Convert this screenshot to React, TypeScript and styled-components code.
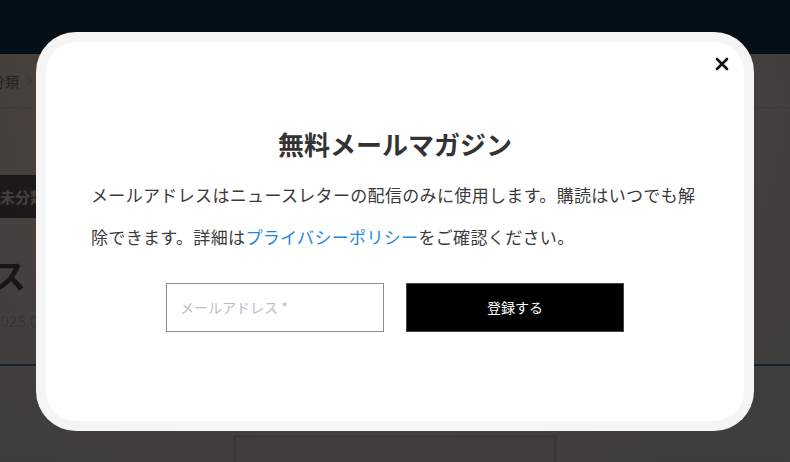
import { createGlobalStyle, styled } from "styled-components";
import { ChevronRight } from "lucide-react";

// Base reset: the page is a fixed viewport with a modal open
const GlobalStyle = createGlobalStyle`
  html, body {
    margin: 0;
    height: 100%;
    overflow: hidden;
    background: #ffffff;
  }
  body {
    font-family: "Noto Sans CJK JP", "Noto Sans", sans-serif;
    color: #333;
  }
  * { box-sizing: border-box; }
`;

// === Page behind the modal ===

const Page = styled.div`
  position: relative;
  min-height: 100vh;
`;

const Header = styled.header`
  position: relative;
  z-index: 20;
  height: 54px;
  background: #050f17;
`;

const BreadcrumbBar = styled.nav`
  height: 54px;
  border-bottom: 1px solid #d8d8d8;
  display: flex;
  justify-content: center;
  overflow: hidden;
`;

const Column = styled.div`
  flex: 0 0 806px;
  display: flex;
  flex-direction: column;
`;

const Crumbs = styled.div`
  display: flex;
  align-items: center;
  gap: 4px;
  height: 100%;
  margin-left: -15px;
  font-size: 14px;
  color: #333;
  svg { color: #777; }
`;

const Article = styled.main`
  display: flex;
  justify-content: center;
  overflow: hidden;
  padding-top: 67px;
`;

const Tag = styled.span`
  align-self: flex-start;
  height: 43px;
  display: flex;
  align-items: center;
  padding: 0 8px;
  background: #071a28;
  color: #fff;
  font-weight: 700;
  font-size: 15px;
`;

const Title = styled.h1`
  margin: 33px 0 0;
  font-size: 34px;
  line-height: 1.4;
  font-weight: 700;
  color: #000;
  white-space: nowrap;
`;

const DateText = styled.p`
  margin: 12px 0 0;
  font-family: Roboto, "Liberation Sans", sans-serif;
  font-size: 15px;
  line-height: 1.5;
  color: #c4c4c4;
`;

const Rule = styled.hr`
  margin: 31px 0 0;
  border: 0;
  height: 2px;
  background: #0a5a8a;
`;

const CopyBox = styled.button`
  align-self: center;
  margin-top: 69px;
  width: 324px;
  height: 60px;
  border: 3px solid #d4d4d4;
  background: #fff;
  font-family: inherit;
  font-size: 15px;
  color: #333;
  padding-top: 10px;
`;

// === Modal ===

const Backdrop = styled.div`
  position: fixed;
  inset: 0;
  z-index: 10;
  background: radial-gradient(
    ellipse 70% 90% at 45% 25%,
    rgba(44, 28, 20, 0.83) 0%,
    rgba(38, 27, 21, 0.83) 45%,
    rgba(22, 22, 22, 0.83) 100%
  );
`;

const ModalLayer = styled.div`
  position: fixed;
  inset: 0;
  z-index: 30;
  display: flex;
  align-items: center;
  justify-content: center;
`;

const Frame = styled.div`
  width: 718px;
  padding: 10px;
  border-radius: 40px;
  background: #f5f5f5;
`;

const Card = styled.section`
  position: relative;
  background: #fff;
  border-radius: 30px;
  padding: 82px 45px 89px;
`;

const CloseButton = styled.button`
  position: absolute;
  top: 13px;
  right: 13px;
  width: 18px;
  height: 18px;
  padding: 0;
  border: 0;
  background: none;
  display: flex;
  align-items: center;
  justify-content: center;
  cursor: pointer;
`;

const ModalTitle = styled.h2`
  margin: 0;
  text-align: center;
  font-size: 26px;
  line-height: 39px;
  font-weight: 700;
  color: #333;
`;

const Lead = styled.p`
  margin: 11px 0 0;
  font-size: 17px;
  line-height: 42.5px;
  letter-spacing: 0.02em;
  color: #3a3a3a;
`;

const PolicyLink = styled.a`
  color: #1f88dc;
  text-decoration: none;
`;

const Form = styled.form`
  margin-top: 24px;
  display: flex;
  justify-content: center;
  gap: 22px;
`;

const EmailInput = styled.input`
  width: 218px;
  height: 49px;
  border: 1px solid #8c8c8c;
  padding: 0 13px;
  font-family: inherit;
  font-size: 14px;
  color: #333;
  outline: none;
  &::placeholder { color: #b9bec6; }
`;

const SubmitButton = styled.button`
  width: 218px;
  height: 49px;
  border: 1px solid #444;
  background: #000;
  color: #fff;
  font-family: inherit;
  font-size: 14px;
  cursor: pointer;
`;

function CloseIcon() {
  return (
    <svg width="14" height="14" viewBox="0 0 14 14">
      <path d="M2 2L12 12M12 2L2 12" stroke="#111" strokeWidth="2.6" strokeLinecap="round" />
    </svg>
  );
}

export default function App() {
  return (
    <>
      <GlobalStyle />
      <Page>
        <Header />
        <BreadcrumbBar>
          <Column>
            <Crumbs>
              <span>未分類</span>
              <ChevronRight size={13} strokeWidth={1.5} />
              <span>テスト記事</span>
            </Crumbs>
          </Column>
        </BreadcrumbBar>
        <Article>
          <Column>
            <Tag>未分類</Tag>
            <Title>ストア新装オープンのお知らせ</Title>
            <DateText>2025.08.01</DateText>
            <Rule />
            <CopyBox>この記事のタイトルとURLをコピーする</CopyBox>
          </Column>
        </Article>
      </Page>

      <Backdrop />
      <ModalLayer>
        <Frame>
          <Card>
            <CloseButton aria-label="閉じる">
              <CloseIcon />
            </CloseButton>
            <ModalTitle>無料メールマガジン</ModalTitle>
            <Lead>
              メールアドレスはニュースレターの配信のみに使用します。購読はいつでも解除できます。詳細は
              <PolicyLink href="#">プライバシーポリシー</PolicyLink>
              をご確認ください。
            </Lead>
            <Form onSubmit={(e) => e.preventDefault()}>
              <EmailInput type="email" placeholder="メールアドレス *" />
              <SubmitButton type="submit">登録する</SubmitButton>
            </Form>
          </Card>
        </Frame>
      </ModalLayer>
    </>
  );
}
